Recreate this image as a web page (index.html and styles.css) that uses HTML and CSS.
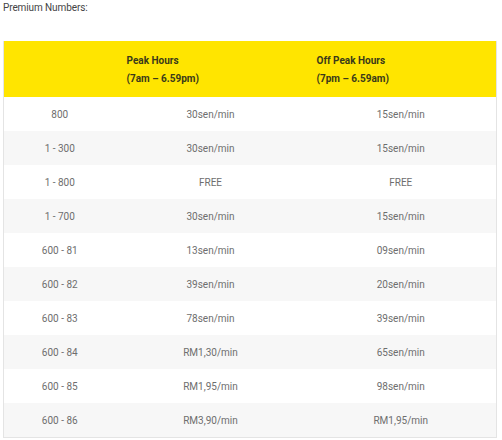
FILE: index.html
```html
<!DOCTYPE html>
<html>
<head>
<meta charset="utf-8">
<link rel="stylesheet" href="styles.css">
</head>
<body>
<p class="title">Premium Numbers:</p>
<table class="rates">
<colgroup><col class="c1"><col class="c2"><col class="c3"></colgroup>
<thead>
<tr><th></th><th>Peak Hours<br>(7am – 6.59pm)</th><th>Off Peak Hours<br>(7pm – 6.59am)</th></tr>
</thead>
<tbody>
<tr><td>800</td><td>30sen/min</td><td>15sen/min</td></tr>
<tr><td>1 - 300</td><td>30sen/min</td><td>15sen/min</td></tr>
<tr><td>1 - 800</td><td>FREE</td><td>FREE</td></tr>
<tr><td>1 - 700</td><td>30sen/min</td><td>15sen/min</td></tr>
<tr><td>600 - 81</td><td>13sen/min</td><td>09sen/min</td></tr>
<tr><td>600 - 82</td><td>39sen/min</td><td>20sen/min</td></tr>
<tr><td>600 - 83</td><td>78sen/min</td><td>39sen/min</td></tr>
<tr><td>600 - 84</td><td>RM1,30/min</td><td>65sen/min</td></tr>
<tr><td>600 - 85</td><td>RM1,95/min</td><td>98sen/min</td></tr>
<tr><td>600 - 86</td><td>RM3,90/min</td><td>RM1,95/min</td></tr>
</tbody>
</table>
</body>
</html>
```
FILE: styles.css
```css
html, body { margin: 0; padding: 0; background: #fff; }
body { padding: 0 5px 0 3px; font-family: Roboto, "Liberation Sans", sans-serif; }
.title { margin: 0; padding-top: 2px; font-size: 10px; line-height: 12px; color: #444; letter-spacing: -0.1px; }
.rates {
  margin-top: 27px;
  width: 494px;
  border-collapse: collapse;
  border: 1px solid #e4e4e4;
  border-top: none;
  table-layout: fixed;
}
.c1 { width: 112px; }
.c2 { width: 190px; }
.rates th {
  box-sizing: border-box;
  background: #ffe500;
  height: 56px;
  padding: 2px 0 0 11px;
  text-align: left;
  font-size: 10px;
  line-height: 18px;
  font-weight: 700;
  color: #3a3a1a;
}
.rates td {
  height: 34px;
  padding: 0;
  text-align: center;
  font-size: 10px;
  color: #6e6e6e;
}
.rates tbody tr:nth-child(even) td { background: #f7f7f7; }
```
